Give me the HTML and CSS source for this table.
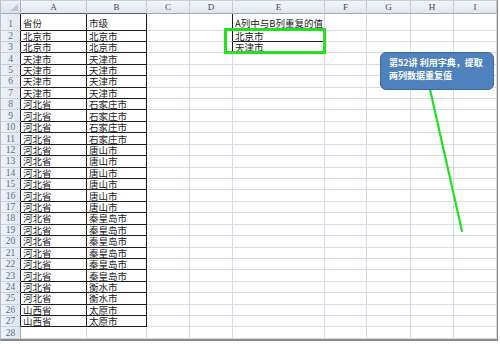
FILE: index.html
```html
<!DOCTYPE html>
<html>
<head>
<meta charset="utf-8">
<link rel="stylesheet" href="styles.css">
</head>
<body>
<div class="sheet">
  <div class="grid">
    <div class="corner"></div><div class="hd k-b">A</div><div class="hd k-b">B</div><div class="hd">C</div><div class="hd">D</div><div class="hd">E</div><div class="hd">F</div><div class="hd">G</div><div class="hd">H</div><div class="hd">I</div>

    <div class="rh k-r tall">1</div><div class="c k-r k-b tall">省份</div><div class="c k-r k-b tall">市级</div><div class="c"></div><div class="c k-r"></div><div class="c k-b tall">A列中与B列重复的值</div><div class="c"></div><div class="c"></div><div class="c"></div><div class="c"></div>
    <div class="rh k-r">2</div><div class="c k-r k-b">北京市</div><div class="c k-r k-b">北京市</div><div class="c"></div><div class="c k-r"></div><div class="c k-r k-b">北京市</div><div class="c"></div><div class="c"></div><div class="c"></div><div class="c"></div>
    <div class="rh k-r">3</div><div class="c k-r k-b">北京市</div><div class="c k-r k-b">北京市</div><div class="c"></div><div class="c k-r"></div><div class="c k-r k-b">天津市</div><div class="c"></div><div class="c"></div><div class="c"></div><div class="c"></div>
    <div class="rh k-r">4</div><div class="c k-r k-b">天津市</div><div class="c k-r k-b">天津市</div><div class="c"></div><div class="c"></div><div class="c"></div><div class="c"></div><div class="c"></div><div class="c"></div><div class="c"></div>
    <div class="rh k-r">5</div><div class="c k-r k-b">天津市</div><div class="c k-r k-b">天津市</div><div class="c"></div><div class="c"></div><div class="c"></div><div class="c"></div><div class="c"></div><div class="c"></div><div class="c"></div>
    <div class="rh k-r">6</div><div class="c k-r k-b">天津市</div><div class="c k-r k-b">天津市</div><div class="c"></div><div class="c"></div><div class="c"></div><div class="c"></div><div class="c"></div><div class="c"></div><div class="c"></div>
    <div class="rh k-r">7</div><div class="c k-r k-b">天津市</div><div class="c k-r k-b">天津市</div><div class="c"></div><div class="c"></div><div class="c"></div><div class="c"></div><div class="c"></div><div class="c"></div><div class="c"></div>
    <div class="rh k-r">8</div><div class="c k-r k-b">河北省</div><div class="c k-r k-b">石家庄市</div><div class="c"></div><div class="c"></div><div class="c"></div><div class="c"></div><div class="c"></div><div class="c"></div><div class="c"></div>
    <div class="rh k-r">9</div><div class="c k-r k-b">河北省</div><div class="c k-r k-b">石家庄市</div><div class="c"></div><div class="c"></div><div class="c"></div><div class="c"></div><div class="c"></div><div class="c"></div><div class="c"></div>
    <div class="rh k-r">10</div><div class="c k-r k-b">河北省</div><div class="c k-r k-b">石家庄市</div><div class="c"></div><div class="c"></div><div class="c"></div><div class="c"></div><div class="c"></div><div class="c"></div><div class="c"></div>
    <div class="rh k-r">11</div><div class="c k-r k-b">河北省</div><div class="c k-r k-b">石家庄市</div><div class="c"></div><div class="c"></div><div class="c"></div><div class="c"></div><div class="c"></div><div class="c"></div><div class="c"></div>
    <div class="rh k-r">12</div><div class="c k-r k-b">河北省</div><div class="c k-r k-b">唐山市</div><div class="c"></div><div class="c"></div><div class="c"></div><div class="c"></div><div class="c"></div><div class="c"></div><div class="c"></div>
    <div class="rh k-r">13</div><div class="c k-r k-b">河北省</div><div class="c k-r k-b">唐山市</div><div class="c"></div><div class="c"></div><div class="c"></div><div class="c"></div><div class="c"></div><div class="c"></div><div class="c"></div>
    <div class="rh k-r">14</div><div class="c k-r k-b">河北省</div><div class="c k-r k-b">唐山市</div><div class="c"></div><div class="c"></div><div class="c"></div><div class="c"></div><div class="c"></div><div class="c"></div><div class="c"></div>
    <div class="rh k-r">15</div><div class="c k-r k-b">河北省</div><div class="c k-r k-b">唐山市</div><div class="c"></div><div class="c"></div><div class="c"></div><div class="c"></div><div class="c"></div><div class="c"></div><div class="c"></div>
    <div class="rh k-r">16</div><div class="c k-r k-b">河北省</div><div class="c k-r k-b">唐山市</div><div class="c"></div><div class="c"></div><div class="c"></div><div class="c"></div><div class="c"></div><div class="c"></div><div class="c"></div>
    <div class="rh k-r">17</div><div class="c k-r k-b">河北省</div><div class="c k-r k-b">唐山市</div><div class="c"></div><div class="c"></div><div class="c"></div><div class="c"></div><div class="c"></div><div class="c"></div><div class="c"></div>
    <div class="rh k-r">18</div><div class="c k-r k-b">河北省</div><div class="c k-r k-b">秦皇岛市</div><div class="c"></div><div class="c"></div><div class="c"></div><div class="c"></div><div class="c"></div><div class="c"></div><div class="c"></div>
    <div class="rh k-r">19</div><div class="c k-r k-b">河北省</div><div class="c k-r k-b">秦皇岛市</div><div class="c"></div><div class="c"></div><div class="c"></div><div class="c"></div><div class="c"></div><div class="c"></div><div class="c"></div>
    <div class="rh k-r">20</div><div class="c k-r k-b">河北省</div><div class="c k-r k-b">秦皇岛市</div><div class="c"></div><div class="c"></div><div class="c"></div><div class="c"></div><div class="c"></div><div class="c"></div><div class="c"></div>
    <div class="rh k-r">21</div><div class="c k-r k-b">河北省</div><div class="c k-r k-b">秦皇岛市</div><div class="c"></div><div class="c"></div><div class="c"></div><div class="c"></div><div class="c"></div><div class="c"></div><div class="c"></div>
    <div class="rh k-r">22</div><div class="c k-r k-b">河北省</div><div class="c k-r k-b">秦皇岛市</div><div class="c"></div><div class="c"></div><div class="c"></div><div class="c"></div><div class="c"></div><div class="c"></div><div class="c"></div>
    <div class="rh k-r">23</div><div class="c k-r k-b">河北省</div><div class="c k-r k-b">秦皇岛市</div><div class="c"></div><div class="c"></div><div class="c"></div><div class="c"></div><div class="c"></div><div class="c"></div><div class="c"></div>
    <div class="rh k-r">24</div><div class="c k-r k-b">河北省</div><div class="c k-r k-b">衡水市</div><div class="c"></div><div class="c"></div><div class="c"></div><div class="c"></div><div class="c"></div><div class="c"></div><div class="c"></div>
    <div class="rh k-r">25</div><div class="c k-r k-b">河北省</div><div class="c k-r k-b">衡水市</div><div class="c"></div><div class="c"></div><div class="c"></div><div class="c"></div><div class="c"></div><div class="c"></div><div class="c"></div>
    <div class="rh k-r">26</div><div class="c k-r k-b">山西省</div><div class="c k-r k-b">太原市</div><div class="c"></div><div class="c"></div><div class="c"></div><div class="c"></div><div class="c"></div><div class="c"></div><div class="c"></div>
    <div class="rh k-r">27</div><div class="c k-r k-b">山西省</div><div class="c k-r k-b">太原市</div><div class="c"></div><div class="c"></div><div class="c"></div><div class="c"></div><div class="c"></div><div class="c"></div><div class="c"></div>
    <div class="rh">28</div><div class="c"></div><div class="c"></div><div class="c"></div><div class="c"></div><div class="c"></div><div class="c"></div><div class="c"></div><div class="c"></div><div class="c"></div>
  </div>

  <div class="highlight"></div>
  <svg class="arrow" width="500" height="344" viewBox="0 0 500 344">
    <line x1="429" y1="85" x2="462" y2="231" stroke="#22e022" stroke-width="2.2" stroke-linecap="round"/>
  </svg>
  <div class="callout">第52讲 利用字典，提取<br>两列数据重复值</div>
</div>
</body>
</html>
```

FILE: styles.css
```css
html, body {
  margin: 0;
  padding: 0;
  background: #ffffff;
}

.sheet {
  position: relative;
  width: 500px;
  height: 344px;
  overflow: hidden;
}

.grid {
  display: grid;
  grid-template-columns: 20px 66px 60px 43px 43px 92px 42px 44px 43px 43px;
  grid-template-rows: 12.5px 17px repeat(27, 11.43px);
  border-left: 1px solid #b4bcc8;
  border-top: 1px solid #c8ced8;
  border-right: 2px solid #8a8a8a;
  border-bottom: 2px solid #8a8a8a;
  box-sizing: border-box;
  width: 498px;
  font-family: "Noto Sans CJK SC", "Noto Sans", sans-serif;
  font-size: 9.5px;
  color: #1a1a1a;
}

.c, .hd, .rh, .corner {
  box-sizing: border-box;
  border-right: 1px solid #d6dce6;
  border-bottom: 1px solid #d6dce6;
  display: flex;
  align-items: center;
  white-space: nowrap;
  overflow: visible;
  min-width: 0;
  min-height: 0;
  height: 100%;
  line-height: 10px;
}

.c {
  padding-left: 2px;
}

.tall {
  padding-top: 2px;
}

.hd {
  justify-content: center;
  background: linear-gradient(#f4f7fb, #dfe6ef);
  border-right-color: #c0cad8;
  border-bottom-color: #9eaabd;
  font-family: "Liberation Serif", serif;
  font-size: 9px;
  color: #3e4652;
}

.corner {
  position: relative;
  background: linear-gradient(#eef2f7, #dce3ec);
  border-right-color: #9eaabd;
  border-bottom-color: #9eaabd;
}

.corner::after {
  content: "";
  position: absolute;
  right: 2px;
  bottom: 2px;
  border-left: 8px solid transparent;
  border-bottom: 7px solid #b9c7da;
}

.rh {
  justify-content: center;
  background: linear-gradient(90deg, #eef2f8, #e1e8f1);
  border-right-color: #9eaabd;
  border-bottom-color: #c8d1de;
  font-family: "Liberation Serif", serif;
  font-size: 9.5px;
  color: #5d6f8a;
}

.rh.tall {
  padding-top: 4px;
}

.k-r {
  border-right-color: #1a1a1a;
}

.k-b {
  border-bottom-color: #1a1a1a;
}

.hd.k-b {
  border-bottom-color: #5a5f66;
}

.highlight {
  position: absolute;
  left: 224px;
  top: 28px;
  width: 102px;
  height: 26px;
  box-sizing: border-box;
  border: 3px solid #22e022;
}

.arrow {
  position: absolute;
  left: 0;
  top: 0;
}

.callout {
  position: absolute;
  left: 380px;
  top: 52px;
  width: 114px;
  height: 38px;
  box-sizing: border-box;
  background: #4f81bd;
  border: 1px solid #3c6aa2;
  border-radius: 6px;
  padding: 4px 0 0 8px;
  color: #ffffff;
  font-family: "Noto Sans CJK SC", "Noto Sans", sans-serif;
  font-weight: bold;
  font-size: 9px;
  line-height: 12.5px;
  white-space: nowrap;
}
```
